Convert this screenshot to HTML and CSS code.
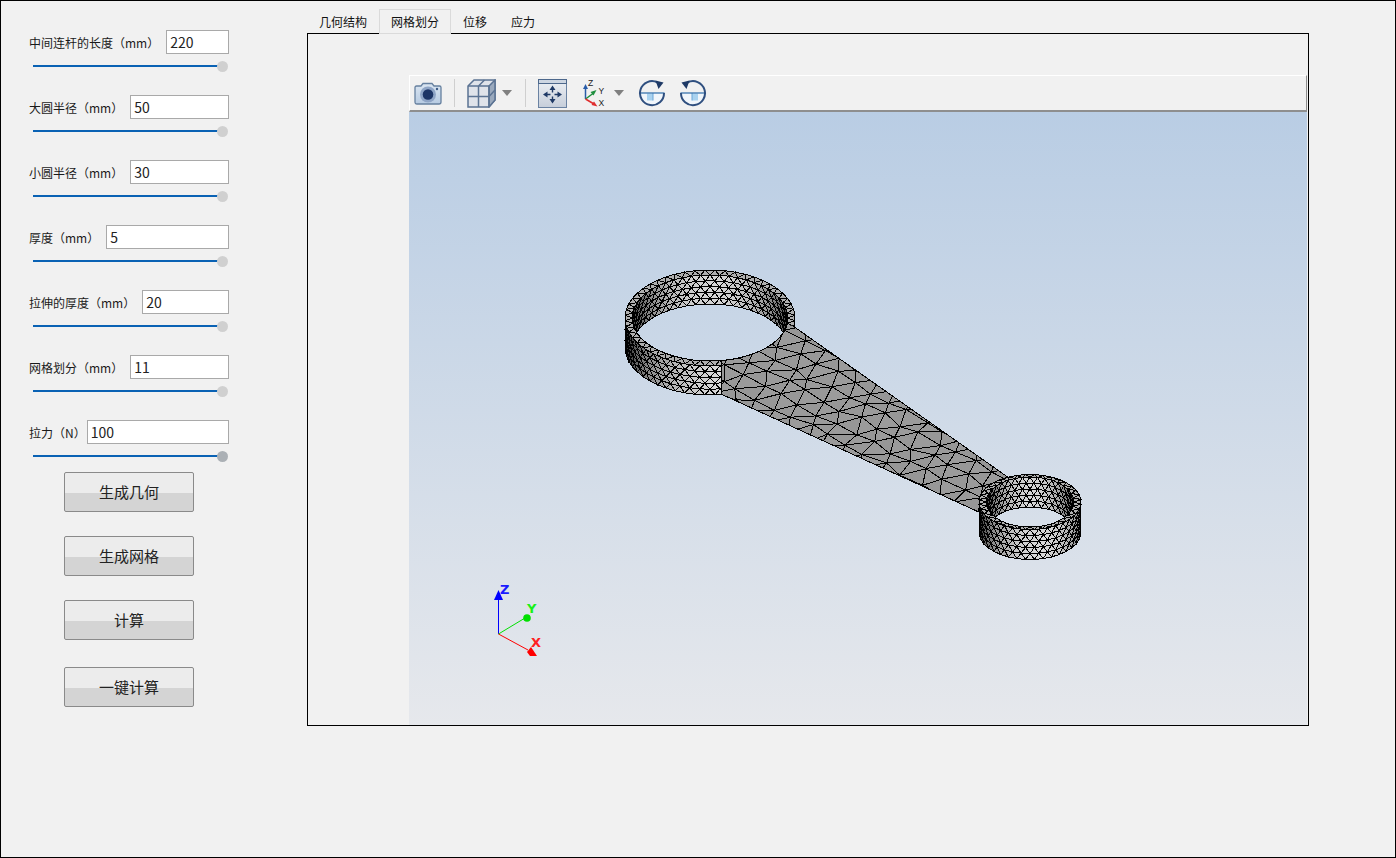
FILE: index.html
```html
<!DOCTYPE html>
<html lang="zh">
<head>
<meta charset="utf-8">
<title>连杆计算</title>
<link rel="stylesheet" href="styles.css">
</head>
<body>
<div class="window">
  <aside class="sidebar">
    <div class="params">
      <div class="param"><div class="row"><label class="label">中间连杆的长度（mm）</label><input class="field" value="220"></div><div class="track"><span class="handle"></span></div></div>
      <div class="param"><div class="row"><label class="label">大圆半径（mm）</label><input class="field" value="50"></div><div class="track"><span class="handle"></span></div></div>
      <div class="param"><div class="row"><label class="label">小圆半径（mm）</label><input class="field" value="30"></div><div class="track"><span class="handle"></span></div></div>
      <div class="param"><div class="row"><label class="label">厚度（mm）</label><input class="field" value="5"></div><div class="track"><span class="handle"></span></div></div>
      <div class="param"><div class="row"><label class="label">拉伸的厚度（mm）</label><input class="field" value="20"></div><div class="track"><span class="handle"></span></div></div>
      <div class="param"><div class="row"><label class="label">网格划分（mm）</label><input class="field" value="11"></div><div class="track"><span class="handle"></span></div></div>
      <div class="param"><div class="row"><label class="label narrow">拉力（N）</label><input class="field" value="100"></div><div class="track"><span class="handle active"></span></div></div>
    </div>
    <div class="actions">
      <button class="btn">生成几何</button>
      <button class="btn">生成网格</button>
      <button class="btn">计算</button>
      <button class="btn last">一键计算</button>
    </div>
  </aside>
  <main class="main">
    <nav class="tabs">
      <span class="tab">几何结构</span>
      <span class="tab selected">网格划分</span>
      <span class="tab">位移</span>
      <span class="tab">应力</span>
    </nav>
    <section class="panel">
      <div class="viewer">
        <div class="toolbar">
          <svg class="icon camera" width="28" height="28" viewBox="0 0 28 28">
            <defs><linearGradient id="cam" x1="0" y1="0" x2="0" y2="1"><stop offset="0" stop-color="#dbe6f2"/><stop offset="1" stop-color="#b7cbe2"/></linearGradient></defs>
            <path d="M1 8.500Q1 7 2.500 7H7L9 4.500H18L20 7H25.500Q27 7 27 8.500V23Q27 25 25 25H3Q1 25 1 23Z" fill="url(#cam)" stroke="#66809f" stroke-width="1.300"/>
            <circle cx="14" cy="15.500" r="8" fill="#8fa5c6"/>
            <circle cx="14" cy="15.500" r="5.300" fill="#1d3566"/>
            <circle cx="23" cy="10" r="1.200" fill="#3c5a86"/>
          </svg>
          <span class="sep"></span>
          <svg class="icon cube" width="29" height="29" viewBox="0 0 29 29">
            <path d="M1 7L7 1H28V21L22 28H1Z" fill="#dfe3ea" stroke="#5b7393" stroke-width="1.500"/>
            <path d="M22 7L28 1V21L22 28Z" fill="#9aa9bd" stroke="#5b7393" stroke-width="1.500"/>
            <path d="M1 7H22V28M1 17.500H22L28 11M11.500 7V28M11.500 7L17.500 1" fill="none" stroke="#5b7393" stroke-width="1.500"/>
          </svg>
          <span class="caret first"></span>
          <span class="sep second"></span>
          <svg class="icon fit" width="29" height="29" viewBox="0 0 29 29">
            <defs><linearGradient id="fitg" x1="0" y1="0" x2="0" y2="1"><stop offset="0" stop-color="#eef1f5"/><stop offset="1" stop-color="#c6ceda"/></linearGradient></defs>
            <rect x="0.500" y="0.500" width="28" height="28" fill="url(#fitg)" stroke="#6a82a2"/>
            <rect x="0.500" y="0.500" width="28" height="4" fill="#cdd6e2" stroke="#4d688c"/>
            <path d="M14.500 10V13.500M14.500 17.500V21M8 15.500H12.500M16.500 15.500H21" stroke="#1f3a66" stroke-width="1.400"/>
            <path d="M14.500 6.500L11.500 11H17.500ZM14.500 24.500L11.500 20H17.500ZM5 15.500L9.500 12.500V18.500ZM24 15.500L19.500 12.500V18.500Z" fill="#1f3a66"/>
          </svg>
          <svg class="icon axes" width="24" height="28" viewBox="0 0 24 28">
            <path d="M2.500 20V9" stroke="#2a5ca8" stroke-width="1.500"/>
            <path d="M2.500 5L0 10H5Z" fill="#2a5ca8"/>
            <path d="M2.500 20L10 14.500" stroke="#1f8f3f" stroke-width="1.500"/>
            <path d="M13.500 11L7.500 13L10.500 16.500Z" fill="#1f8f3f"/>
            <path d="M2.500 20L11 25" stroke="#e02d2d" stroke-width="1.500"/>
            <path d="M14.500 27.500L11 22.500L8.500 26Z" fill="#e02d2d"/>
            <text class="axis-letter" x="5" y="7">Z</text>
            <text class="axis-letter" x="15.500" y="15">Y</text>
            <text class="axis-letter" x="15.500" y="27">X</text>
          </svg>
          <span class="caret second"></span>
          <svg class="icon rot" width="28" height="28" viewBox="0 0 28 28">
            <g>
              <path d="M2 14H26A12 12 0 0 1 2 14Z" fill="#f1f6fb"/>
              <rect x="9" y="14.500" width="6" height="7" fill="#a9d2ef"/>
              <path d="M15 14V21.500" stroke="#6aa5d6"/>
              <path d="M1.500 14H26.500" stroke="#2a6ba8" stroke-width="1.200"/>
              <path d="M19.500 3.500A12 12 0 1 0 26 14" fill="none" stroke="#2f4f7f" stroke-width="2"/>
              <path d="M17.500 1.500L25.500 3.500L20.500 10Z" fill="#1f3a66"/>
            </g>
          </svg>
          <svg class="icon rot next" width="28" height="28" viewBox="0 0 28 28">
            <g transform="translate(28 0) scale(-1 1)">
              <path d="M2 14H26A12 12 0 0 1 2 14Z" fill="#f1f6fb"/>
              <rect x="9" y="14.500" width="6" height="7" fill="#a9d2ef"/>
              <path d="M15 14V21.500" stroke="#6aa5d6"/>
              <path d="M1.500 14H26.500" stroke="#2a6ba8" stroke-width="1.200"/>
              <path d="M19.500 3.500A12 12 0 1 0 26 14" fill="none" stroke="#2f4f7f" stroke-width="2"/>
              <path d="M17.500 1.500L25.500 3.500L20.500 10Z" fill="#1f3a66"/>
            </g>
          </svg>
        </div>
        <div class="scene">
          <svg id="scene" class="scene-svg" viewBox="409 112 898 613" width="898" height="613">
            <g id="model" class="mesh"></g>
            <g class="triad">
              <path class="ax-z" d="M498.500 634V598"/>
              <path class="tip-z" d="M498.500 590L494 600H503Z"/>
              <text class="letter-z" x="500" y="594">Z</text>
              <path class="ax-y" d="M498.500 634L525 618"/>
              <circle class="tip-y" cx="527" cy="618" r="3.800"/>
              <text class="letter-y" x="527" y="613">Y</text>
              <path class="ax-x" d="M498.500 634L528 650"/>
              <path class="tip-x" d="M537 656L531 647L527 652L530 656Z"/>
              <text class="letter-x" x="531" y="647">X</text>
            </g>
          </svg>
        </div>
      </div>
    </section>
  </main>
</div>
<script src="mesh.js"></script>
</body>
</html>
```
FILE: styles.css
```css
* { box-sizing: border-box; }
html, body { margin: 0; padding: 0; }
body {
  width: 1396px;
  height: 858px;
  overflow: hidden;
  background: #f1f1f1;
  font-family: "Noto Sans CJK SC", "Noto Sans", sans-serif;
  color: #111;
}
.window {
  display: flex;
  width: 1396px;
  height: 858px;
  border: 1px solid #000;
  background: #f1f1f1;
}

/* left column */
.sidebar {
  width: 306px;
  flex: none;
  padding: 29px 78px 0 28px;
}
.params { display: flex; flex-direction: column; gap: 13px; }
.param { height: 52px; }
.row { display: flex; align-items: center; height: 24px; }
.label { font-size: 12px; line-height: 24px; padding-top: 2px; white-space: nowrap; margin-right: 7px; color: #1a1a1a; }
.label.narrow { margin-right: 1px; }
.field {
  flex: 1;
  min-width: 0;
  height: 24px;
  border: 1px solid #a9a9a9;
  background: #fff;
  padding: 0 3px;
  font: 14px "Noto Sans CJK SC", "Noto Sans", sans-serif;
  color: #222;
  outline: none;
}
.track {
  position: relative;
  width: 190px;
  height: 2px;
  margin: 11px 0 0 4px;
  background: #0a62b4;
}
.handle {
  position: absolute;
  right: -5px;
  top: -4px;
  width: 11px;
  height: 11px;
  border-radius: 50%;
  background: #d0d0d0;
}
.handle.active { background: #abb0b5; }
.actions { display: flex; flex-direction: column; align-items: center; gap: 24px; }
.btn {
  width: 130px;
  height: 40px;
  border: 1px solid #8a8a8a;
  border-radius: 2px;
  background: linear-gradient(#ececec 0, #ececec 20px, #d4d4d4 20px, #d4d4d4 100%);
  font: 15px "Noto Sans CJK SC", "Noto Sans", sans-serif;
  color: #222;
  padding: 0 0 2px;
}
.btn.last { margin-top: 3px; }

/* right column */
.main { flex: none; width: 1002px; padding-top: 8px; display: flex; flex-direction: column; }
.tabs { display: flex; height: 24px; }
.tab {
  padding: 0 11px;
  font-size: 12px;
  line-height: 24px;
  color: #111;
  border: 1px solid transparent;
  border-bottom: 0;
}
.tab.selected {
  border-color: #dadada;
  border-bottom: 1px solid #dadada;
  background: #f1f1f1;
  position: relative;
  z-index: 1;
  height: 25px;
}
.panel {
  width: 1002px;
  height: 693px;
  border: 1px solid #000;
  padding: 41px 1px 0 101px;
}
.viewer { display: flex; flex-direction: column; height: 100%; }
.toolbar {
  height: 37px;
  flex: none;
  display: flex;
  align-items: center;
  padding: 0 0 0 5px;
  background: #f1f1f1;
  border-top: 1px solid #fff;
  border-left: 1px solid #fff;
  border-right: 1px solid #8e8e8e;
  border-bottom: 2px solid #8e8e8e;
}
.icon { flex: none; display: block; }
.camera { margin-left: -1px; }
.sep { width: 1px; height: 28px; background: #cfcfcf; margin: 0 12px; flex: none; }
.caret {
  flex: none;
  width: 0;
  height: 0;
  border-left: 5.5px solid transparent;
  border-right: 5.5px solid transparent;
  border-top: 6px solid #808080;
}
.caret.first { margin-left: 6px; }
.sep.second { margin-left: 13px; }
.caret.second { margin-left: 7px; margin-right: 14px; }
.axes { margin: 0 0 0 16px; }
.rot.next { margin-left: 13px; }
.axis-letter { font: 8.5px "Liberation Sans", sans-serif; fill: #222; }
.scene {
  flex: 1;
  min-height: 0;
  background: linear-gradient(#b9cde4, #e6e8ec);
}
.scene-svg { display: block; }
.mesh polygon {
  stroke: #000;
  stroke-width: 1;
  shape-rendering: crispEdges;
}
.mesh .outline {
  fill: none;
  stroke: #000;
  stroke-width: 1;
  shape-rendering: crispEdges;
}

/* orientation triad */
.triad path { stroke-width: 1; fill: none; }
.ax-z { stroke: #0000ff; }
.ax-y { stroke: #00e000; }
.ax-x { stroke: #ff0000; }
.triad .tip-z { fill: #0000ff; }
.triad .tip-y { fill: #00e000; }
.triad .tip-x { fill: #ff0000; }
.triad text { font: bold 13px "DejaVu Sans", sans-serif; }
.letter-z { fill: #1a1aff; }
.letter-y { fill: #19f019; }
.letter-x { fill: #ff2020; }
```
FILE: mesh.js
```js
(function () {
  var NS = "http://www.w3.org/2000/svg";
  var svg = document.getElementById("scene");
  var model = document.getElementById("model");
  var defs = document.createElementNS(NS, "defs");
  svg.insertBefore(defs, model);

  function el(name, attrs, parent) {
    var n = document.createElementNS(NS, name);
    for (var k in attrs) n.setAttribute(k, attrs[k]);
    if (parent) parent.appendChild(n);
    return n;
  }
  function rgb(v) {
    v = Math.max(0, Math.min(255, Math.round(v)));
    return "rgb(" + v + "," + v + "," + v + ")";
  }
  function tri(g, a, b, c, gray) {
    el("polygon", {
      points: a[0].toFixed(1) + "," + a[1].toFixed(1) + " " + b[0].toFixed(1) + "," + b[1].toFixed(1) + " " + c[0].toFixed(1) + "," + c[1].toFixed(1),
      fill: rgb(gray)
    }, g);
  }
  var seed = 11;
  function rnd() {
    seed = (seed * 16807) % 2147483647;
    return seed / 2147483647 - 0.5;
  }

  /* Offset-row lattice on a band: point(i, theta) gives the screen position */
  function band(g, rows, cols, point, keep, shade) {
    var d = Math.PI * 2 / cols;
    function P(i, j) { return point(i, (j + (i % 2 ? 0.5 : 0)) * d); }
    for (var i = 0; i < rows; i++) {
      for (var j = 0; j < cols; j++) {
        var th = (j + 0.5) * d;
        if (!keep(th)) continue;
        var g1 = shade(th - d * 0.2), g2 = shade(th + d * 0.3);
        if (i % 2 === 0) {
          tri(g, P(i, j), P(i, j + 1), P(i + 1, j), g1);
          tri(g, P(i, j + 1), P(i + 1, j + 1), P(i + 1, j), g2);
        } else {
          tri(g, P(i, j), P(i + 1, j + 1), P(i + 1, j), g1);
          tri(g, P(i, j), P(i, j + 1), P(i + 1, j + 1), g2);
        }
      }
    }
  }

  function outerShade(th) {
    return 45 + 170 * Math.max(0, Math.cos(th - 1.35));
  }
  function innerShade(th) {
    return 62 + 150 * Math.pow(Math.abs(Math.sin(th)), 1.5);
  }

  function ring(r, id) {
    var g = el("g", {}, model);
    // outer wall
    band(g, r.rows, r.cols, function (i, t) {
      return [r.cx + r.rx * Math.cos(t), r.cy + r.ry * Math.sin(t) + r.h * i / r.rows];
    }, function (t) { return Math.sin(t) > -0.12; }, outerShade);
    // inner wall, seen through the top opening
    var clip = el("clipPath", { id: "open" + id }, defs);
    el("ellipse", { cx: r.cx, cy: r.cy, rx: r.irx, ry: r.iry }, clip);
    var top = el("g", {}, model);
    var inner = el("g", { "clip-path": "url(#open" + id + ")" }, top);
    band(inner, r.rows, r.cols, function (i, t) {
      return [r.cx + r.irx * Math.cos(t), r.cy + r.iry * Math.sin(t) + r.h * i / r.rows];
    }, function (t) { return Math.sin(t) < 0.3; }, innerShade);
    // top annulus
    band(top, 1, r.cols, function (i, t) {
      var rx = i ? r.rx : r.irx, ry = i ? r.ry : r.iry;
      return [r.cx + rx * Math.cos(t), r.cy + ry * Math.sin(t)];
    }, function () { return true; }, function () { return 175; });
  }

  var big = { cx: 710, cy: 318, rx: 85, ry: 48, irx: 78, iry: 43, h: 29, rows: 5, cols: 52 };
  var small = { cx: 1030, cy: 502, rx: 51, ry: 27.5, irx: 44, iry: 25, h: 30, rows: 5, cols: 36 };

  ring(big, "Big");

  /* arm: a flat plate, triangulated in its own plane, cut by the large hole */
  var armPts = "721,350 721,394 981,513 992,495 1009,478 793,326 785,325";
  var armMask = el("mask", { id: "armMask", maskUnits: "userSpaceOnUse", x: 409, y: 112, width: 898, height: 613 }, defs);
  el("polygon", { points: armPts, fill: "#fff", stroke: "none" }, armMask);
  el("ellipse", { cx: big.cx, cy: big.cy, rx: big.irx, ry: big.iry, fill: "#000" }, armMask);
  var arm = el("g", { mask: "url(#armMask)" }, model);
  var side = 25, sq = 0.55, a = 0.76;
  var ex = [Math.cos(a) * side, Math.sin(a) * side * sq];
  var ey = [Math.cos(a + Math.PI / 3) * side, Math.sin(a + Math.PI / 3) * side * sq];
  var grid = {};
  function V(i, j) {
    var k = i + "_" + j;
    if (!grid[k]) {
      grid[k] = [720 + i * ex[0] + j * ey[0] + rnd() * 8, 330 + i * ex[1] + j * ey[1] + rnd() * 5];
    }
    return grid[k];
  }
  for (var i = -14; i < 25; i++) {
    for (var j = -14; j < 18; j++) {
      var p = V(i, j);
      if (p[0] < 680 || p[0] > 1040 || p[1] < 290 || p[1] > 550) continue;
      tri(arm, V(i, j), V(i + 1, j), V(i, j + 1), 155);
      tri(arm, V(i + 1, j), V(i + 1, j + 1), V(i, j + 1), 151);
    }
  }
  el("path", { class: "outline", d: "M721 361V394L981 513M793 326L1009 478" }, model);
  // edge of the plate along the large hole
  var holeEdge = "";
  for (var t = 0.12; t < 1.45; t += 0.04) {
    holeEdge += (holeEdge ? "L" : "M") + (big.cx + big.irx * Math.cos(t)).toFixed(1) + " " + (big.cy + big.iry * Math.sin(t)).toFixed(1);
  }
  el("path", { class: "outline", d: holeEdge }, model);

  ring(small, "Small");
})();
```
